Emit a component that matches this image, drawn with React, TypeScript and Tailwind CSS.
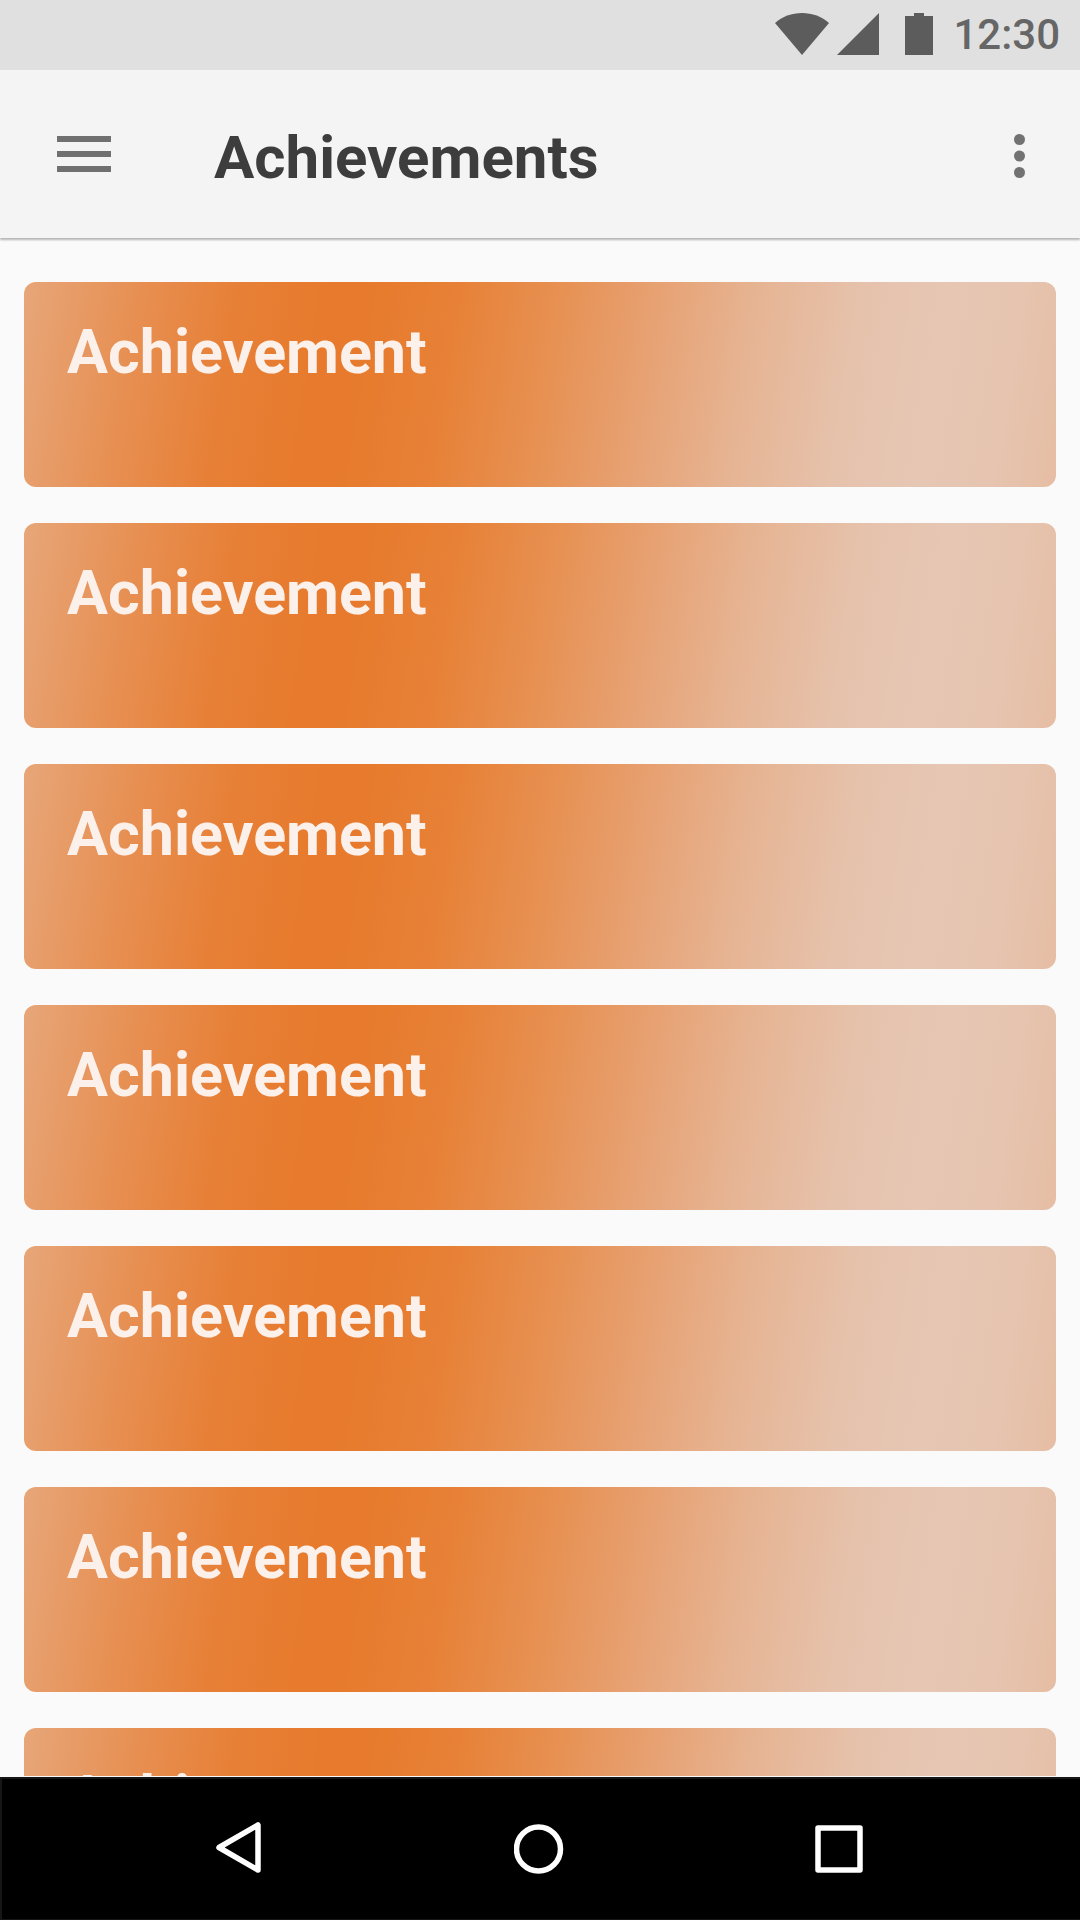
const achievements = [
  { id: 1, title: 'Achievement' },
  { id: 2, title: 'Achievement' },
  { id: 3, title: 'Achievement' },
  { id: 4, title: 'Achievement' },
  { id: 5, title: 'Achievement' },
  { id: 6, title: 'Achievement' },
  { id: 7, title: 'Achievement' },
];

function StatusBar() {
  return (
    <div className="flex h-[70px] shrink-0 items-center justify-end bg-[#e0e0e0] pr-5 pb-[2px] text-[#5c5c5c]">
      <svg className="h-[42px] w-[54px]" viewBox="0 0 54 42" fill="currentColor" aria-label="Wi-Fi">
        <path d="M0 10C7 3.500 17 0 27 0s20 3.500 27 10L27 42z" />
      </svg>
      <svg className="ml-2 h-[42px] w-[42px]" viewBox="0 0 42 42" fill="currentColor" aria-label="Signal">
        <path d="M42 0v42H0z" />
      </svg>
      <svg className="ml-[26px] h-[42px] w-7" viewBox="0 0 28 42" fill="currentColor" aria-label="Battery">
        <path d="M9 0h10v3h9v39H0V3h9z" />
      </svg>
      <span className="ml-5 pt-[2px] text-[42px] leading-[42px] font-medium text-[#666666]">12:30</span>
    </div>
  );
}

function AppBar() {
  return (
    <header className="z-10 flex h-[168px] shrink-0 items-center bg-[#f4f4f4] pr-8 pl-12 shadow-[0_2px_2px_rgba(0,0,0,0.28)]">
      <button type="button" aria-label="Open menu" className="flex h-[72px] w-[72px] items-center justify-center">
        <svg className="h-[37px] w-[54px]" viewBox="0 0 54 37" fill="#707070">
          <path d="M0 0h54v6H0zM0 15h54v6H0zM0 30h54v6H0z" />
        </svg>
      </button>
      <h1 className="ml-[94px] flex-1 pt-2 text-[60px] leading-[72px] font-bold text-[#3d3d3d]">Achievements</h1>
      <button type="button" aria-label="More options" className="flex h-[72px] w-14 items-center justify-center pt-1">
        <svg className="h-11 w-3" viewBox="0 0 12 44" fill="#727272">
          <circle cx="5.500" cy="5.500" r="5.500" />
          <circle cx="5.500" cy="22" r="5.500" />
          <circle cx="5.500" cy="38.500" r="5.500" />
        </svg>
      </button>
    </header>
  );
}

function AchievementCard({ title }: { title: string }) {
  return (
    <li className="min-h-[205px] shrink-0 rounded-xl bg-[linear-gradient(99deg,#e7a679_0%,#e79155_10%,#e78037_20%,#e77a2c_29%,#e77a2c_32%,#e78137_41%,#e79051_50%,#e7a274_60%,#e6b493_69%,#e6c2ac_79%,#e6c7b4_87%,#e6c4af_94%,#e6bda4_100%)] px-[43px] pt-[34px]">
      <h2 className="text-[61px] leading-[72px] font-bold text-[#fcf0eb]">{title}</h2>
    </li>
  );
}

function NavigationBar() {
  return (
    <nav className="grid h-[143px] shrink-0 grid-cols-[1fr_300px_300px_300px_1fr] items-center border-t-2 border-b border-l-2 border-[#161616] bg-black pr-1">
      <button type="button" aria-label="Back" className="col-start-2 flex h-24 items-center justify-center pb-[2px]">
        <svg className="h-[54px] w-12" viewBox="0 0 48 54" fill="none" stroke="white" strokeWidth="5.500" strokeLinejoin="round">
          <path d="M43 4v45L4 26.500z" />
        </svg>
      </button>
      <button type="button" aria-label="Home" className="flex h-24 items-center justify-center">
        <svg className="h-[50px] w-[50px]" viewBox="0 0 50 50" fill="none" stroke="white" strokeWidth="5.500">
          <circle cx="24.500" cy="25" r="22" />
        </svg>
      </button>
      <button type="button" aria-label="Recent apps" className="flex h-24 items-center justify-center">
        <svg className="h-[50px] w-[50px]" viewBox="0 0 50 50" fill="none" stroke="white" strokeWidth="5.500" strokeLinejoin="round">
          <path d="M4 4h42v42H4z" />
        </svg>
      </button>
    </nav>
  );
}

export default function App() {
  return (
    <div className="flex h-dvh flex-col bg-[#fafafa] font-['Roboto',sans-serif]">
      <StatusBar />
      <AppBar />
      <main className="min-h-0 flex-1 overflow-hidden border-b border-[#fafafa] px-6 pt-11">
        <ul className="flex flex-col gap-9">
          {achievements.map((item) => (
            <AchievementCard key={item.id} title={item.title} />
          ))}
        </ul>
      </main>
      <NavigationBar />
    </div>
  );
}
